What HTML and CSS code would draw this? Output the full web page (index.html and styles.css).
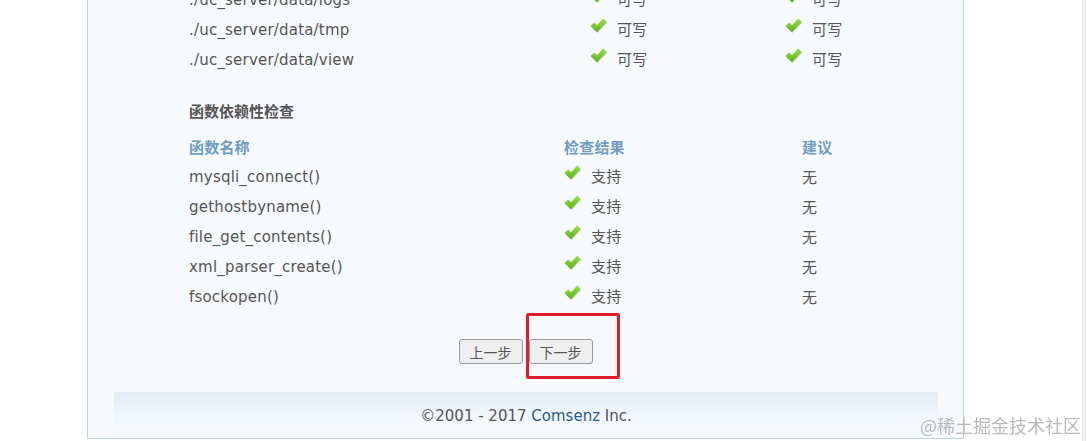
FILE: index.html
```html
<!DOCTYPE html>
<html lang="zh-CN">
<head>
    <meta charset="UTF-8">
    <title>安装 - 检查安装环境</title>
    <link rel="stylesheet" href="styles.css">
</head>
<body>
    <div class="main">
        <div class="content">
            <table class="tb dirs">
                <colgroup><col class="c1"><col class="c2"><col></colgroup>
                <tr>
                    <td>./uc_server/data/logs</td>
                    <td><span class="w"><svg class="ok" viewBox="0 0 17 15"><use href="#chk"/></svg>可写</span></td>
                    <td><span class="w"><svg class="ok" viewBox="0 0 17 15"><use href="#chk"/></svg>可写</span></td>
                </tr>
                <tr>
                    <td>./uc_server/data/tmp</td>
                    <td><span class="w"><svg class="ok" viewBox="0 0 17 15"><use href="#chk"/></svg>可写</span></td>
                    <td><span class="w"><svg class="ok" viewBox="0 0 17 15"><use href="#chk"/></svg>可写</span></td>
                </tr>
                <tr>
                    <td>./uc_server/data/view</td>
                    <td><span class="w"><svg class="ok" viewBox="0 0 17 15"><use href="#chk"/></svg>可写</span></td>
                    <td><span class="w"><svg class="ok" viewBox="0 0 17 15"><use href="#chk"/></svg>可写</span></td>
                </tr>
            </table>

            <h2 class="title">函数依赖性检查</h2>

            <table class="tb funcs">
                <colgroup><col class="c1"><col class="c2"><col></colgroup>
                <tr class="th">
                    <td>函数名称</td>
                    <td>检查结果</td>
                    <td>建议</td>
                </tr>
                <tr>
                    <td>mysqli_connect()</td>
                    <td><span class="w"><svg class="ok" viewBox="0 0 17 15"><use href="#chk"/></svg>支持</span></td>
                    <td class="cn">无</td>
                </tr>
                <tr>
                    <td>gethostbyname()</td>
                    <td><span class="w"><svg class="ok" viewBox="0 0 17 15"><use href="#chk"/></svg>支持</span></td>
                    <td class="cn">无</td>
                </tr>
                <tr>
                    <td>file_get_contents()</td>
                    <td><span class="w"><svg class="ok" viewBox="0 0 17 15"><use href="#chk"/></svg>支持</span></td>
                    <td class="cn">无</td>
                </tr>
                <tr>
                    <td>xml_parser_create()</td>
                    <td><span class="w"><svg class="ok" viewBox="0 0 17 15"><use href="#chk"/></svg>支持</span></td>
                    <td class="cn">无</td>
                </tr>
                <tr>
                    <td>fsockopen()</td>
                    <td><span class="w"><svg class="ok" viewBox="0 0 17 15"><use href="#chk"/></svg>支持</span></td>
                    <td class="cn">无</td>
                </tr>
            </table>
        </div>

        <div class="btnbox">
            <div class="btns">
                <input type="button" class="btn" value="上一步">
                <input type="button" class="btn" value="下一步">
                <div class="mark"></div>
            </div>
        </div>

        <div class="footer">&copy;2001 - 2017 <a href="#">Comsenz</a> Inc.</div>
    </div>

    <div class="scrollbar"></div>
    <div class="watermark">@稀土掘金技术社区</div>

    <svg width="0" height="0" class="defs">
        <defs>
            <linearGradient id="g" x1="0" y1="0" x2="0" y2="1">
                <stop offset="0" stop-color="#9ee04a"/>
                <stop offset="1" stop-color="#5aae1c"/>
            </linearGradient>
            <g id="chk">
                <polygon points="0.5,8 4.2,4.4 7,7.2 13.2,0.6 16.8,4 7,14.2" fill="#4f9a18" opacity="0.3" transform="translate(0.3,0.8)"/>
                <polygon points="0.5,8 4.2,4.4 7,7.2 13.2,0.6 16.8,4 7,14.2" fill="url(#g)"/>
            </g>
        </defs>
    </svg>
</body>
</html>
```

FILE: styles.css
```css
* {
    box-sizing: border-box;
}

body {
    margin: 0;
    background: #fff;
    font-family: 'DejaVu Sans', 'Noto Sans CJK SC', sans-serif;
    font-size: 15px;
    color: #555;
    overflow: hidden;
}

.main {
    width: 877px;
    margin: -17px 0 0 87px;
    background: #f6fafd;
    border: 1px solid #bfd3de;
}

.content {
    padding-left: 101px;
}

.tb {
    border-collapse: collapse;
    width: 100%;
}

.tb td {
    padding: 1px 0 0;
    height: 30px;
    vertical-align: middle;
    letter-spacing: 0.2px;
    white-space: nowrap;
}

.dirs .c1 { width: 401px; }
.dirs .c2 { width: 195px; }
.funcs .c1 { width: 375px; }
.funcs .c2 { width: 238px; }

.title {
    margin: 27px 0 10px;
    font-size: 15px;
    line-height: 20px;
    font-weight: bold;
    color: #555;
    font-family: 'Noto Sans CJK SC', sans-serif;
}

.th td,
.tb td.cn {
    font-family: 'Noto Sans CJK SC', sans-serif;
    padding-top: 0;
}

.th td {
    color: #6f9cbf;
    font-weight: bold;
}

.w {
    display: flex;
    align-items: center;
    height: 29px;
    padding-bottom: 3px;
    font-family: 'Noto Sans CJK SC', sans-serif;
    color: #555;
}

.ok {
    width: 17px;
    height: 15px;
    margin: 0 10px 6px 0;
}

.btnbox {
    padding: 28px 0;
}

.btns {
    position: relative;
    display: flex;
    justify-content: center;
    gap: 6px;
}

.btn {
    width: 64px;
    height: 25px;
    padding: 0;
    border: 1px solid #9a9a9a;
    border-radius: 3px;
    background: #efefef;
    color: #555;
    font-family: 'Noto Sans CJK SC', sans-serif;
    font-size: 14px;
}

.mark {
    position: absolute;
    left: 438px;
    top: -26px;
    width: 94px;
    height: 66px;
    border: 3px solid #e11d2b;
    border-radius: 2px;
}

.footer {
    height: 46px;
    margin: 0 25px 0 26px;
    background: linear-gradient(#e3edf5, #f3f8fc 60%, #f6fafd);
    text-align: center;
    line-height: 48px;
    color: #555;
}

.footer a {
    color: #2b5b8c;
    text-decoration: none;
}

.scrollbar {
    position: fixed;
    top: 0;
    right: 0;
    bottom: 0;
    width: 5px;
    background: #f0f0f0;
    border-left: 1px solid #e6e6e6;
}

.watermark {
    position: fixed;
    right: 6px;
    bottom: 3px;
    font-family: 'Noto Sans CJK SC', sans-serif;
    font-size: 18px;
    color: #b9b9b9;
}

.defs {
    position: absolute;
}
```
